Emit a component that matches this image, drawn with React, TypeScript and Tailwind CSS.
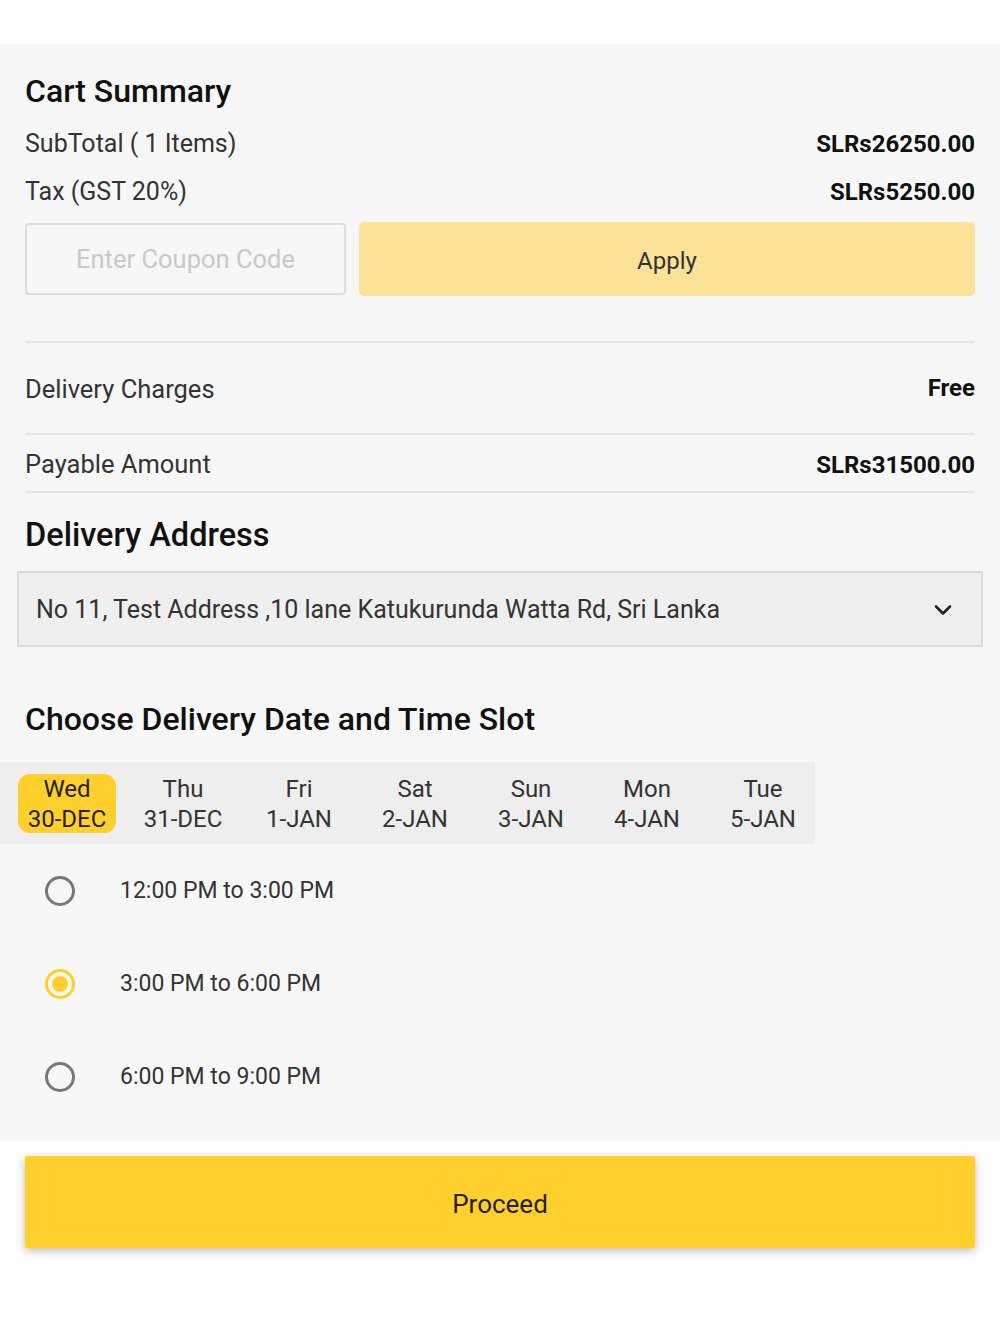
import React from "react";

const dates = [
  ["Wed", "30-DEC"],
  ["Thu", "31-DEC"],
  ["Fri", "1-JAN"],
  ["Sat", "2-JAN"],
  ["Sun", "3-JAN"],
  ["Mon", "4-JAN"],
  ["Tue", "5-JAN"],
];

const slots = ["12:00 PM to 3:00 PM", "3:00 PM to 6:00 PM", "6:00 PM to 9:00 PM"];

export default function App() {
  return (
    <div
      className="w-[1000px] h-[1334px] bg-[#fdfdfd] flex flex-col text-[#222]"
      style={{ fontFamily: "Roboto, 'Noto Sans', sans-serif" }}
    >
      <div className="h-[44px] shrink-0 bg-[#fdfdfd]" />
      <div className="bg-[#f7f7f7] h-[1097px] shrink-0 flex flex-col">
        <div className="px-[25px] flex flex-col">
          <div className="h-[75px] flex items-end pb-[10px]">
            <h1 className="text-[32px] leading-[36px] font-medium text-[#111]">Cart Summary</h1>
          </div>
          <div className="h-[48px] pt-[2px] flex items-center justify-between">
            <span className="text-[25px] text-[#333]">SubTotal ( 1 Items)</span>
            <span className="text-[24px] font-bold text-[#111]">SLRs26250.00</span>
          </div>
          <div className="h-[48px] pt-[2px] flex items-center justify-between">
            <span className="text-[25px] text-[#333]">Tax (GST 20%)</span>
            <span className="text-[24px] font-bold text-[#111]">SLRs5250.00</span>
          </div>
          <div className="mt-[7px] h-[74px] flex gap-[13px] items-center">
            <div className="w-[321px] h-[72px] border-2 border-[#dcdce4] rounded-[4px] flex items-center justify-center text-[25.5px] text-[#c9c9c9]">
              Enter Coupon Code
            </div>
            <div className="flex-1 h-[74px] pt-[3px] bg-[#fbe297] rounded-[5px] flex items-center justify-center text-[24px] text-[#333]">
              Apply
            </div>
          </div>
          <div className="mt-[45px] h-[2px] bg-[#e4e4e4]" />
          <div className="h-[90px] pt-[3px] flex items-center justify-between">
            <span className="text-[25.5px] text-[#333]">Delivery Charges</span>
            <span className="text-[24px] font-bold text-[#111] -translate-y-[2px]">Free</span>
          </div>
          <div className="h-[2px] bg-[#e4e4e4]" />
          <div className="h-[56px] pt-[3px] flex items-center justify-between">
            <span className="text-[25.5px] text-[#333]">Payable Amount</span>
            <span className="text-[24px] font-bold text-[#111]">SLRs31500.00</span>
          </div>
          <div className="h-[2px] bg-[#e4e4e4]" />
          <div className="h-[78px] pt-[6px] flex items-center">
            <span className="text-[32.5px] font-medium text-[#111]">Delivery Address</span>
          </div>
        </div>
        <div className="mx-[17px] h-[76px] pt-[2px] bg-[#efefef] border-2 border-[#dadada] flex items-center justify-between pl-[17px] pr-[26px]">
          <span className="text-[25px] text-[#333]">No 11, Test Address ,10 lane Katukurunda Watta Rd, Sri Lanka</span>
          <svg width="24" height="24" viewBox="0 0 24 24" fill="none" stroke="#222" strokeWidth="2.6" strokeLinecap="round" strokeLinejoin="round">
            <path d="M5 8.5l7 7 7-7" />
          </svg>
        </div>
        <div className="px-[25px] h-[115px] flex items-end pb-[24px]">
          <span className="text-[32px] leading-[38px] font-medium text-[#111]">Choose Delivery Date and Time Slot</span>
        </div>
        <div className="w-[815px] h-[82px] bg-[#eeeeee] flex items-center pl-[9px] overflow-hidden">
          {dates.map(([d, dt], i) => (
            <div key={i} className="w-[116px] shrink-0 flex items-center justify-center">
              <div
                className={
                  i === 0
                    ? "bg-[#ffd02b] rounded-[12px] w-[98px] h-[59px] pt-[1px] flex flex-col items-center justify-center text-[24px] leading-[30px] text-[#222]"
                    : "w-[98px] h-[59px] pt-[1px] flex flex-col items-center justify-center text-[24px] leading-[30px] text-[#333]"
                }
              >
                <span>{d}</span>
                <span>{dt}</span>
              </div>
            </div>
          ))}
        </div>
        <div className="flex flex-col">
          {slots.map((s, i) => (
            <div key={i} className="h-[93px] flex items-center pl-[45px]">
              {i === 1 ? (
                <div className="w-[30px] h-[30px] rounded-full border-[3px] border-[#ffd02b] flex items-center justify-center">
                  <div className="w-[16px] h-[16px] rounded-full bg-[#ffd02b]" />
                </div>
              ) : (
                <div className="w-[30px] h-[30px] rounded-full border-[3px] border-[#777777]" />
              )}
              <span className="ml-[45px] pt-[2px] text-[23px] text-[#333]">{s}</span>
            </div>
          ))}
        </div>
      </div>
      <div className="px-[25px] pt-[15px]">
        <div className="h-[92px] pt-[5px] bg-[#ffd02b] rounded-[2px] shadow-[0_3px_8px_rgba(0,0,0,0.25)] flex items-center justify-center text-[26px] text-[#222]">
          Proceed
        </div>
      </div>
    </div>
  );
}
